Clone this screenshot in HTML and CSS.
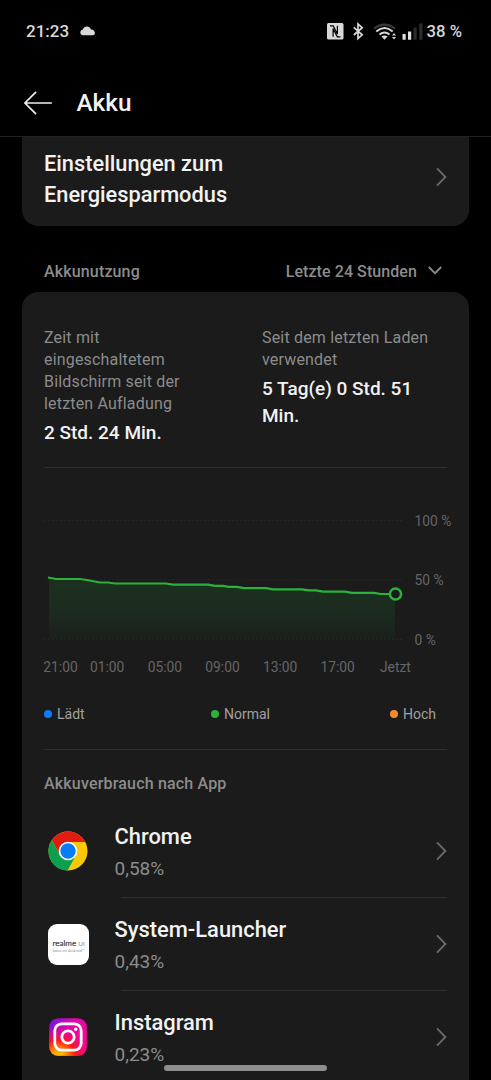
FILE: index.html
```
<!DOCTYPE html>
<html lang="de">

<head>
    <meta charset="UTF-8">
    <meta name="viewport" content="width=device-width, initial-scale=1.0">
    <title>Akku</title>
    <link rel="stylesheet" href="styles.css">
</head>

<body>
    <div class="status-bar">
        <span class="clock">21:23</span>
        <svg class="cloud" width="16" height="10" viewBox="0 0 16 10">
            <path d="M3 9.2 C-0.6 9.2 -0.4 4 2.6 3.8 C4 -0.6 9.6 -0.6 11 3.4 C15 3 16.6 9.2 12.8 9.2 Z" fill="#d8d8d8" />
        </svg>
        <div class="status-icons">
            <svg width="100" height="20" viewBox="0 0 100 20">
                <!-- nfc -->
                <rect x="0" y="2" width="16.5" height="16.5" rx="1.5" fill="#d8d8d8" />
                <path d="M3 4.8 H6.2 L10.4 13 V4.8 M13.5 15.8 H10.3 L6.1 7.6 V15.8" fill="none" stroke="#000" stroke-width="1.2" />
                <!-- bluetooth -->
                <path d="M26.8 6.3 L35.2 13.8 L31 17.6 V3 L35.2 6.7 L26.8 14" fill="none" stroke="#d8d8d8" stroke-width="1.7" />
                <!-- wifi -->
                <g fill="none" stroke-width="2">
                    <path d="M47 7.6 Q57.5 -0.4 68 7.6" stroke="#3a3a3a" />
                    <path d="M49.3 10.4 Q57.5 3.6 65.7 10.4" stroke="#d8d8d8" />
                    <path d="M52.5 13.6 Q57.5 9.4 62.5 13.6" stroke="#d8d8d8" />
                </g>
                <path d="M54.4 15.6 Q57.5 13.2 60.6 15.6 L57.5 18.8 Z" fill="#d8d8d8" />
                <path d="M65 14.4 L67 12 L69 14.4 Z M65 16 L67 18.4 L69 16 Z" fill="#d8d8d8" />
                <!-- signal -->
                <path d="M75.5 13 H78.7 V18.8 H75.5 Z M81 10.5 H84.2 V18.8 H81 Z" fill="#e0e0e0" />
                <path d="M86.5 6.5 H89.7 V18.8 H86.5 Z M92.3 2.5 H95.5 V18.8 H92.3 Z" fill="#2c2c2c" />
            </svg>
            <span class="level">38 %</span>
        </div>
    </div>

    <header class="title-bar">
        <svg width="29" height="24" viewBox="0 0 29 24">
            <path d="M27.2 12 H1.2 M11.6 1.4 L0.9 12 L11.6 22.6" fill="none" stroke="#f0f0f0" stroke-width="1.7" stroke-linecap="round" />
        </svg>
        <h1>Akku</h1>
    </header>

    <section class="card saver-card">
        <h2>Einstellungen zum<br>Energiesparmodus</h2>
        <svg class="chevron" width="12" height="20" viewBox="0 0 12 20">
            <path d="M2 1.4 L10.4 10 L2 18.6" />
        </svg>
    </section>

    <div class="usage-head">
        <span>Akkunutzung</span>
        <span class="range">Letzte 24 Stunden
            <svg width="14" height="11" viewBox="0 0 14 11">
                <path d="M0.8 1 L7 7.2 L13.2 1" fill="none" stroke="#8c8c8c" stroke-width="1.8" />
            </svg>
        </span>
    </div>

    <section class="card usage-card">
        <div class="stats">
            <div>
                <p>Zeit mit<br>eingeschaltetem<br>Bildschirm seit der<br>letzten Aufladung</p>
                <strong>2 Std. 24 Min.</strong>
            </div>
            <div>
                <p>Seit dem letzten Laden<br>verwendet</p>
                <strong>5 Tag(e) 0 Std. 51<br>Min.</strong>
            </div>
        </div>

        <svg class="chart" width="425" height="190" viewBox="0 0 425 190">
            <defs>
                <linearGradient id="fill" x1="0" y1="0" x2="0" y2="1">
                    <stop offset="0" stop-color="#1b321e" />
                    <stop offset="0.55" stop-color="#1c2b1f" />
                    <stop offset="1" stop-color="#1b201c" />
                </linearGradient>
            </defs>
            <path d="M5 89.5 L12 91 H36 L43 92 L56 94.5 H64 L71 95.5 H122 L129 96.7 H164 L171 97.8 H179 L185 98.8 H193 L200 100.2 H222 L229 101.3 H258 L265 102.4 H272 L279 103.7 H301 L308 104.9 H330 L337 106 H351 V151 H5 Z" fill="url(#fill)" />
            <path class="grid" d="M0 32.5 H358 M0 91.7 H358 M0 151.5 H358" />
            <path class="line" d="M4 89.5 L12 91 H36 L43 92 L56 94.5 H64 L71 95.5 H122 L129 96.7 H164 L171 97.8 H179 L185 98.8 H193 L200 100.2 H222 L229 101.3 H258 L265 102.4 H272 L279 103.7 H301 L308 104.9 H330 L337 106 H351" />
            <circle cx="351.5" cy="106" r="5.6" fill="#1b1b1b" stroke="#2cb13c" stroke-width="2.5" />
            <g class="axis">
                <text x="370.5" y="38.3">100 %</text>
                <text x="370.5" y="97.3">50 %</text>
                <text x="370.5" y="156.7">0 %</text>
                <text x="-0.7" y="184">21:00</text>
                <text x="46" y="184">01:00</text>
                <text x="103.7" y="184">05:00</text>
                <text x="161.3" y="184">09:00</text>
                <text x="219" y="184">13:00</text>
                <text x="276.5" y="184">17:00</text>
                <text x="336" y="184">Jetzt</text>
            </g>
        </svg>

        <div class="legend">
            <span><i class="dot blue"></i>Lädt</span>
            <span><i class="dot green"></i>Normal</span>
            <span><i class="dot orange"></i>Hoch</span>
        </div>

        <h3>Akkuverbrauch nach App</h3>

        <div class="app">
            <svg class="app-icon" width="48" height="48" viewBox="-24 -24 48 48">
                <circle r="19.5" fill="#fbc806" />
                <path d="M0 -9 H17.3 A19.5 19.5 0 0 0 -16.1 -11 L-7.8 4.5 L0 0 Z" fill="#e21b12" />
                <path d="M-16.1 -11 A19.5 19.5 0 0 0 -0.5 19.5 L7.8 4.5 L0 0 L-7.8 4.5 Z" fill="#0d9f4e" />
                <circle r="9.3" fill="#fff" />
                <circle r="7.7" fill="#087cf5" />
            </svg>
            <div class="app-row">
                <div>
                    <h4>Chrome</h4>
                    <p>0,58%</p>
                </div>
                <svg class="chevron" width="12" height="20" viewBox="0 0 12 20">
                    <path d="M2 1.4 L10.4 10 L2 18.6" />
                </svg>
            </div>
        </div>

        <div class="app">
            <div class="app-icon realme">
                <b>realme <span>UI</span></b>
                <small>base on Android™</small>
            </div>
            <div class="app-row">
                <div>
                    <h4>System-Launcher</h4>
                    <p>0,43%</p>
                </div>
                <svg class="chevron" width="12" height="20" viewBox="0 0 12 20">
                    <path d="M2 1.4 L10.4 10 L2 18.6" />
                </svg>
            </div>
        </div>

        <div class="app">
            <svg class="app-icon" width="48" height="48" viewBox="-24 -24 48 48">
                <defs>
                    <linearGradient id="insta" x1="0" y1="0" x2="1" y2="0.6">
                        <stop offset="0" stop-color="#6a13e0" />
                        <stop offset="0.45" stop-color="#d808b4" />
                        <stop offset="1" stop-color="#fb0590" />
                    </linearGradient>
                    <radialGradient id="glow" cx="0.25" cy="1.05" r="0.85">
                        <stop offset="0" stop-color="#ffd600" />
                        <stop offset="0.25" stop-color="#ff9a00" />
                        <stop offset="0.55" stop-color="#ff1420" />
                        <stop offset="1" stop-color="#ff0580" stop-opacity="0" />
                    </radialGradient>
                </defs>
                <rect x="-18.8" y="-18.8" width="37.6" height="37.6" rx="9" fill="url(#insta)" />
                <rect x="-18.8" y="-18.8" width="37.6" height="37.6" rx="9" fill="url(#glow)" />
                <g fill="none" stroke="#fff" stroke-width="2.8">
                    <rect x="-13.2" y="-13.2" width="26.4" height="26.4" rx="7" />
                    <circle r="6.2" />
                </g>
                <circle cx="7.7" cy="-7.7" r="1.7" fill="#fff" />
            </svg>
            <div class="app-row">
                <div>
                    <h4>Instagram</h4>
                    <p>0,23%</p>
                </div>
                <svg class="chevron" width="12" height="20" viewBox="0 0 12 20">
                    <path d="M2 1.4 L10.4 10 L2 18.6" />
                </svg>
            </div>
        </div>
    </section>

    <div class="home-bar"></div>
</body>

</html>
```
FILE: styles.css
```
* {
    box-sizing: border-box;
    margin: 0;
    padding: 0;
}

body {
    position: relative;
    height: 1080px;
    overflow: hidden;
    background-color: #000;
    color: #f2f2f2;
    font-family: Roboto, sans-serif;
}

svg {
    display: block;
    flex-shrink: 0;
}

.status-bar {
    display: flex;
    align-items: center;
    height: 62px;
    padding: 0 29px 0 26px;
    font-size: 17px;
    font-weight: 500;
    color: #d8d8d8;
}

.cloud {
    margin-left: 11px;
}

.status-icons {
    display: flex;
    align-items: center;
    margin-left: auto;
}

.level {
    font-size: 16.7px;
}

.title-bar {
    display: flex;
    align-items: center;
    gap: 23.5px;
    height: 75px;
    padding: 7px 24px 0;
    border-bottom: 1px solid #222;
}

.title-bar h1 {
    font-size: 24.3px;
    font-weight: 500;
}

.card {
    margin: 0 22px;
    padding: 0 22px;
    background-color: #1b1b1b;
}

.saver-card {
    display: flex;
    justify-content: space-between;
    align-items: flex-start;
    height: 89px;
    padding-top: 11px;
    border-radius: 0 0 16px 16px;
}

.saver-card h2 {
    font-size: 21.8px;
    font-weight: 500;
    line-height: 31px;
}

.saver-card .chevron {
    margin-top: 19px;
}

.chevron path {
    fill: none;
    stroke: #6c6c6c;
    stroke-width: 1.8;
}

.usage-head {
    display: flex;
    justify-content: space-between;
    align-items: center;
    height: 66px;
    padding: 24px 49px 0 44px;
    font-size: 16px;
    font-weight: 500;
    letter-spacing: 0.15px;
    color: #8c8c8c;
}

.range {
    display: flex;
    align-items: center;
    gap: 11px;
    letter-spacing: 0.08px;
}

.usage-card {
    height: 800px;
    padding-top: 35px;
    border-radius: 16px 16px 0 0;
}

.stats {
    display: grid;
    grid-template-columns: 218px auto;
    height: 141px;
    border-bottom: 1px solid #2e2e2e;
}

.stats p {
    margin-bottom: 4px;
    font-size: 16px;
    line-height: 22px;
    letter-spacing: 0.18px;
    color: #8c8c8c;
}

.stats strong {
    display: block;
    font-size: 19px;
    font-weight: 500;
    line-height: 27px;
}

.chart {
    margin-top: 20px;
}

.grid {
    stroke: #262626;
    stroke-dasharray: 2 2;
}

.line {
    fill: none;
    stroke: #2cb13c;
    stroke-width: 2.2;
    stroke-linejoin: round;
}

.axis {
    font-size: 13.8px;
    fill: #666;
}

.legend {
    display: grid;
    grid-template-columns: 167px 179px auto;
    align-items: center;
    height: 72px;
    padding-top: 1px;
    border-bottom: 1px solid #2e2e2e;
    font-size: 14px;
    color: #a0a0a0;
}

.legend span {
    display: flex;
    align-items: center;
}

.dot {
    width: 8px;
    height: 8px;
    margin-right: 5px;
    border-radius: 50%;
}

.blue {
    background-color: #0a7cff;
}

.green {
    background-color: #2cb13c;
}

.orange {
    background-color: #f88c2c;
}

.usage-card h3 {
    height: 55px;
    font-size: 16px;
    font-weight: 500;
    line-height: 68px;
    letter-spacing: 0.18px;
    color: #8c8c8c;
}

.app {
    display: flex;
    align-items: center;
    height: 93px;
}

.app-icon {
    flex-shrink: 0;
    margin-right: 22.5px;
    margin-bottom: 1px;
}

.app-row {
    display: flex;
    flex: 1;
    justify-content: space-between;
    align-items: center;
    height: 93px;
    background: linear-gradient(#2e2e2e, #2e2e2e) 6px bottom / 100% 1px no-repeat;
}

.app-row .chevron {
    margin-bottom: 2px;
}

.app h4 {
    padding-top: 2px;
    font-size: 21.9px;
    font-weight: 500;
    line-height: 32px;
}

.app p {
    font-size: 19px;
    line-height: 32px;
    color: #8c8c8c;
}

.app .realme {
    width: 41px;
    height: 41px;
    margin: 0 25.5px 0 4px;
    padding: 14px 3px 0 4.5px;
    border-radius: 9px;
    background-color: #fff;
    color: #444;
    white-space: nowrap;
}

.realme b {
    display: block;
    font-family: Lato, sans-serif;
    font-size: 8px;
    font-weight: 400;
    line-height: 11px;
    -webkit-text-stroke: 0.2px #444;
}

.realme span {
    font-size: 6.5px;
    color: #888;
    -webkit-text-stroke: 0;
}

.realme small {
    display: block;
    font-size: 4.1px;
    line-height: 4px;
    color: #999;
}

.home-bar {
    position: absolute;
    left: 164px;
    bottom: 9px;
    width: 163px;
    height: 6px;
    border-radius: 3px;
    background-color: #8e8e8e;
}
```
